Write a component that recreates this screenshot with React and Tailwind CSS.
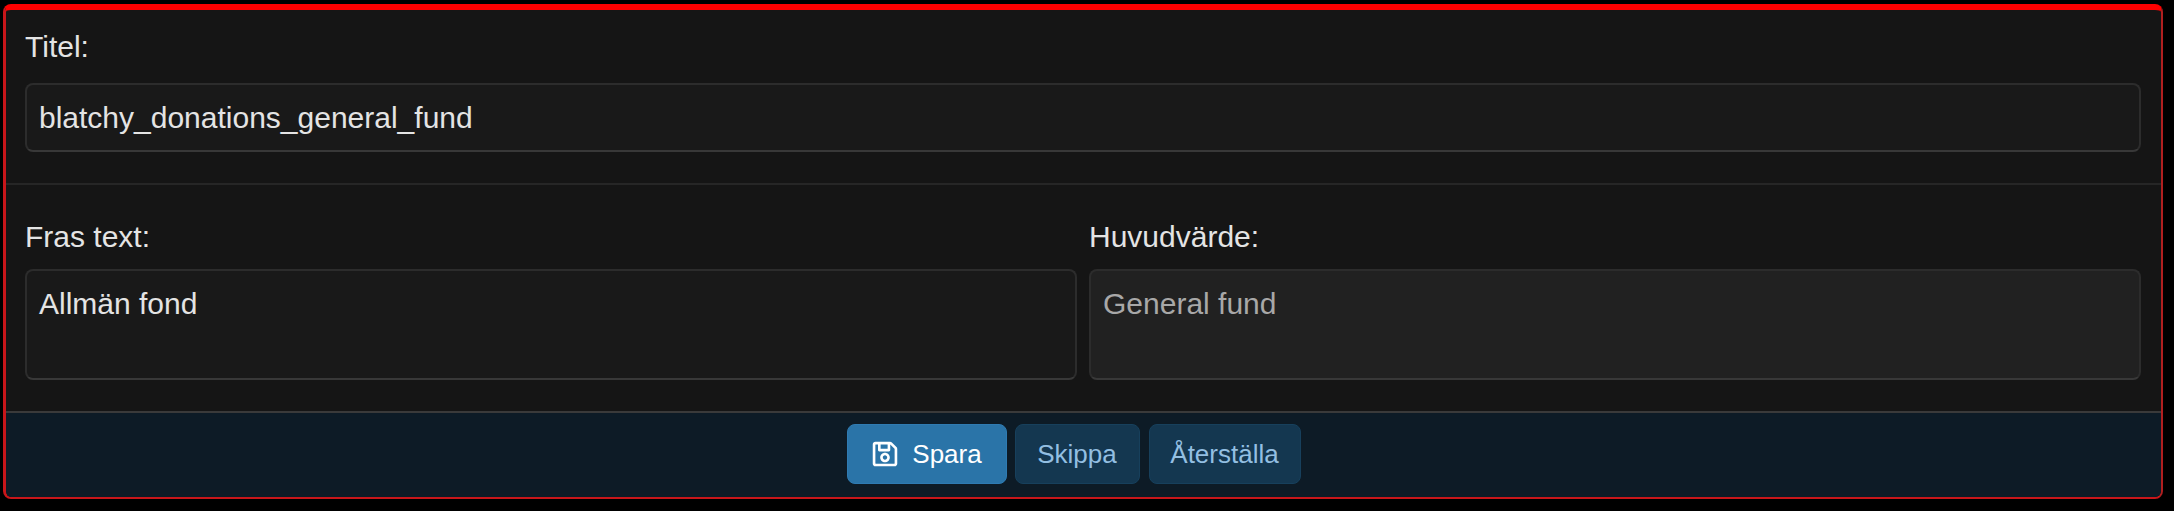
import { FaRegSave } from "react-icons/fa"

const font = "font-['Liberation_Sans',Arial,sans-serif]"

function Label({ children }) {
  return <div className="text-[30px] leading-[34px] text-[#e4e4e4]">{children}</div>
}

export default function App() {
  return (
    <div className={`min-h-[511px] bg-black pt-1 pr-[11px] pb-[15px] pl-[3px] ${font}`}>
      <div className="overflow-hidden rounded-[8px] border-2 border-t-[6px] border-l-[3px] border-[#c8161a] border-t-[#ff0000] border-r-[#b01f1f] bg-[#151515]">

        {/* Title */}
        <div className="border-b-2 border-[#262626] pt-[20px] pr-5 pb-[31px] pl-[19px]">
          <Label>Titel:</Label>
          <div className="mt-[19px] flex h-[69px] items-center rounded-[8px] border-2 border-[#2c2c2c] border-b-[#383838] bg-[#191919] px-[12px] text-[30px] text-[#e4e4e4]">
            blatchy_donations_general_fund
          </div>
        </div>

        {/* Phrase and main value */}
        <div className="grid grid-cols-2 gap-3 pt-[35px] pr-5 pb-[31px] pl-[19px]">
          <div>
            <Label>Fras text:</Label>
            <div className="mt-[15px] h-[111px] rounded-[8px] border-2 border-[#2c2c2c] border-b-[#383838] bg-[#191919] px-[12px] pt-[16px] text-[30px] leading-[34px] text-[#e4e4e4]">
              Allmän fond
            </div>
          </div>
          <div>
            <Label>Huvudvärde:</Label>
            <div className="mt-[15px] h-[111px] rounded-[8px] border-2 border-[#2c2c2c] border-b-[#383838] bg-[#212121] px-[12px] pt-[16px] text-[30px] leading-[34px] text-[#a8a8a8]">
              General fund
            </div>
          </div>
        </div>

        {/* Actions */}
        <div className="flex h-[86px] items-center justify-center gap-2 border-t-2 border-[#3a3a3a] bg-[#0d1b26] pr-5 pb-[2px] text-[26px]">
          <button className="flex h-[60px] w-[160px] items-center justify-center gap-[13px] rounded-[8px] border border-[#2f7bb2] bg-[#2a74a8] text-white">
            <FaRegSave size={28} />
            Spara
          </button>
          <button className="h-[60px] w-[125px] rounded-[8px] border border-[#17405c] bg-[#143750] text-[#93bfe2]">Skippa</button>
          <button className="ml-px h-[60px] w-[152px] rounded-[8px] border border-[#17405c] bg-[#143750] text-[#93bfe2]">Återställa</button>
        </div>
      </div>
    </div>
  )
}
